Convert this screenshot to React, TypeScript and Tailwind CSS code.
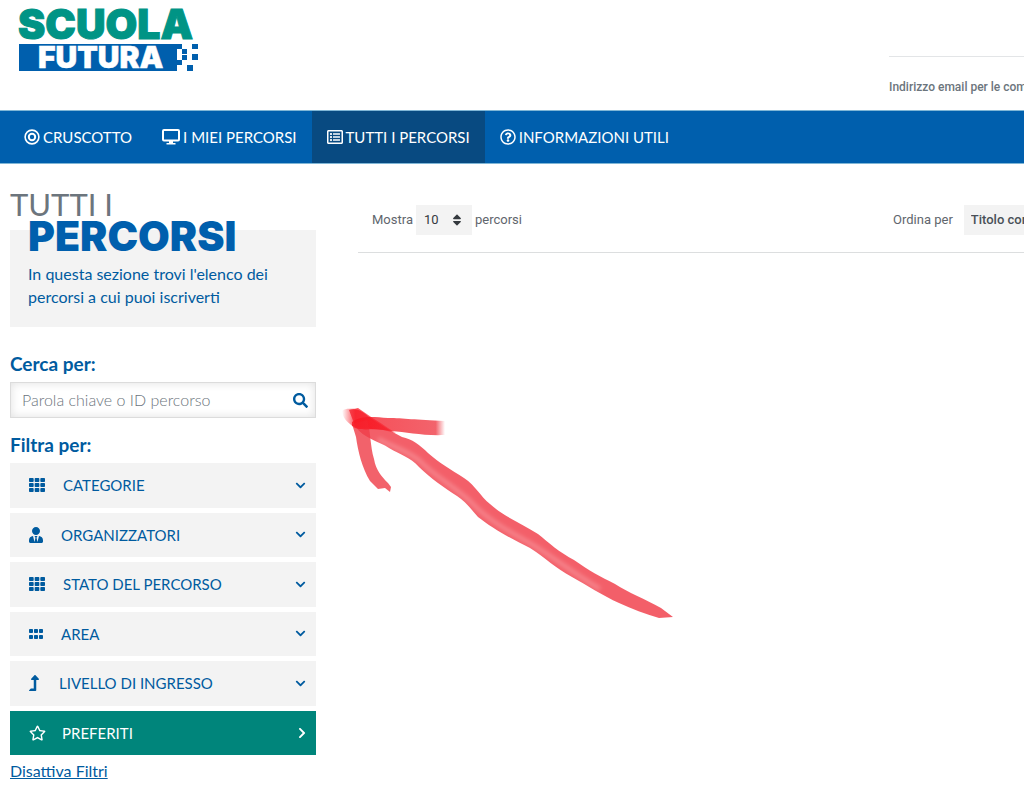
import React from 'react';
import {
  FaChevronDown,
  FaChevronRight,
  FaGripHorizontal,
  FaLevelUpAlt,
  FaRegListAlt,
  FaRegQuestionCircle,
  FaRegStar,
  FaSearch,
  FaSort,
  FaTh,
  FaUserTie,
} from 'react-icons/fa';

const TargetIcon = () => (
  <svg viewBox="0 0 16 16" className="w-4 h-4" fill="none" stroke="currentColor" aria-hidden="true">
    <circle cx="8" cy="8" r="6.9" strokeWidth="1.6" />
    <circle cx="8" cy="8" r="3.2" strokeWidth="2" />
  </svg>
);

const MonitorIcon = () => (
  <svg viewBox="0 0 18 16" className="w-[18px] h-4" fill="none" stroke="currentColor" aria-hidden="true">
    <rect x="1" y="1" width="16" height="10.5" rx="1" strokeWidth="2" />
    <path d="M7 12h4v2h2.5v1.6h-9V14H7z" fill="currentColor" stroke="none" />
  </svg>
);

const navItems = [
  { label: 'CRUSCOTTO', icon: <TargetIcon />, active: false },
  { label: 'I MIEI PERCORSI', icon: <MonitorIcon />, active: false },
  { label: 'TUTTI I PERCORSI', icon: <FaRegListAlt className="w-4 h-4" />, active: true },
  { label: 'INFORMAZIONI UTILI', icon: <FaRegQuestionCircle className="w-4 h-4" />, active: false },
];

const filters = [
  { label: 'CATEGORIE', icon: <FaTh className="w-4 h-4" />, gap: 'gap-[18px]' },
  { label: 'ORGANIZZATORI', icon: <FaUserTie className="w-3.5 h-4" />, gap: 'gap-[18px]' },
  { label: 'STATO DEL PERCORSO', icon: <FaTh className="w-4 h-4" />, gap: 'gap-[18px]' },
  { label: 'AREA', icon: <FaGripHorizontal className="w-3.5 h-4" />, gap: 'gap-[18px]' },
  { label: 'LIVELLO DI INGRESSO', icon: <FaLevelUpAlt className="w-2.5 h-4" />, gap: 'gap-5' },
];

const Logo = () => (
  <a href="#home" aria-label="Scuola Futura" className="block">
    <svg viewBox="0 0 182 66" className="w-[182px] h-[66px]" fontFamily="Inter, sans-serif" fontWeight="900">
      <text x="0" y="33" fontSize="41" fill="#009485" stroke="#009485" strokeWidth="1">SCUOLA</text>
      <path
        fill="#005fad"
        d="M1 38h158v16h5v5h-5v6H1z M159 38h5v5h-5z M174 38h6v5h-6z M164 43h5v5h-5z M174 48h6v6h-6z M164 49h5v5h-5z M169 59h6v6h-6z"
      />
      <text x="20" y="62" fontSize="30" fill="#fff" stroke="#fff" strokeWidth="0.5">FUTURA</text>
    </svg>
  </a>
);

const Header = () => (
  <header className="flex justify-between pl-[18px] h-[110px]">
    <div className="pt-1.5">
      <Logo />
    </div>
    <div className="w-[135px] pt-14 overflow-hidden">
      <p className="border-t border-[#e3e5e7] pt-5 text-[12px] leading-5 font-medium text-[#6c757d] whitespace-nowrap font-['Roboto',sans-serif]">
        Indirizzo email per le comunicazioni
      </p>
    </div>
  </header>
);

const Navbar = () => (
  <nav className="flex bg-[#005fad] border-y border-[#7fb6d6] pl-[9px]">
    {navItems.map((item) => (
      <a
        key={item.label}
        href="#nav"
        className={`flex items-center gap-[3px] px-[15px] h-[52px] text-[15px] text-white whitespace-nowrap ${item.active ? 'bg-[#084a81]' : ''}`}
      >
        {item.icon}
        {item.label}
      </a>
    ))}
  </nav>
);

const Sidebar = () => (
  <aside className="w-[306px] shrink-0 pt-[27px] text-[#005b9f]">
    <h1 className="text-[31px] leading-[26px] text-[#6c757d]">TUTTI I</h1>
    <div className="flex flex-col mt-[13px] bg-[#f3f3f3] px-[18px] pb-[19px]">
      <strong className="-mt-3.5 text-[41px] leading-10 font-black text-[#005fad] font-['Inter',sans-serif]">PERCORSI</strong>
      <p className="mt-1.5 text-[16px] leading-[23px]">In questa sezione trovi l'elenco dei percorsi a cui puoi iscriverti</p>
    </div>

    <label htmlFor="search" className="block mt-[25px] text-[19px] leading-6 font-bold">
      Cerca per:
    </label>
    <div className="flex items-center mt-1.5 h-9 border border-[#dcdcdc] shadow-[inset_0_0_10px_rgba(0,0,0,0.12)]">
      <input
        id="search"
        type="text"
        placeholder="Parola chiave o ID percorso"
        className="grow min-w-0 pl-[11px] text-[16px] bg-transparent outline-none placeholder:text-[#6c757d] placeholder:font-light"
      />
      <button type="button" aria-label="Cerca" className="px-[7px]">
        <FaSearch className="w-[15px] h-[15px]" />
      </button>
    </div>

    <h2 className="mt-[15px] text-[19px] leading-6 font-bold">Filtra per:</h2>
    <div className="grid auto-rows-fr gap-[5px] h-[292px] mt-1.5 text-[15px]">
      {filters.map((filter) => (
        <button
          key={filter.label}
          type="button"
          className={`flex items-center pl-[19px] pr-2.5 bg-[#f3f3f3] ${filter.gap}`}
        >
          {filter.icon}
          <span className="grow text-left">{filter.label}</span>
          <FaChevronDown className="w-[11px] h-[11px]" />
        </button>
      ))}
      <button type="button" className="flex items-center gap-4 pl-[19px] pr-2.5 bg-[#00857b] text-white">
        <FaRegStar className="w-[17px] h-4" />
        <span className="grow text-left">PREFERITI</span>
        <FaChevronRight className="w-2 h-3" />
      </button>
    </div>
    <a href="#reset" className="inline-block mt-1 text-[16px] leading-6 underline">
      Disattiva Filtri
    </a>
  </aside>
);

const Results = () => (
  <section className="grow min-w-0 font-['Roboto',sans-serif] text-[13px] text-[#5f666d]">
    <div className="flex items-center justify-between pt-[41px] pb-[17px] pl-3.5 border-b border-[#dcdedf]">
      <div className="flex items-center gap-[3px]">
        <label htmlFor="page-size">Mostra</label>
        <div className="relative">
          <select id="page-size" className="appearance-none w-14 h-[30px] pl-2 bg-[#f3f3f3] text-[#34393e]">
            <option>10</option>
          </select>
          <FaSort className="absolute right-2.5 top-2 w-2.5 h-3.5 text-[#34393e] pointer-events-none" />
        </div>
        <span>percorsi</span>
      </div>
      <div className="flex items-center gap-[11px] w-[131px] overflow-hidden whitespace-nowrap">
        <label htmlFor="order">Ordina per</label>
        <select id="order" className="appearance-none shrink-0 w-[150px] h-[30px] pl-[7px] bg-[#f3f3f3] font-medium text-[#495057]">
          <option>Titolo corso</option>
        </select>
      </div>
    </div>
  </section>
);

/* Brush-painted arrow that points to the search box */
const BrushArrow = () => (
  <svg viewBox="0 0 360 240" className="absolute left-[330px] top-[390px] w-[360px] h-60 pointer-events-none" aria-hidden="true">
    <defs>
      <linearGradient id="barb" x1="0" x2="1">
        <stop offset="0" stopColor="#f5202c" stopOpacity="0.8" />
        <stop offset="0.9" stopColor="#f04852" stopOpacity="0.85" />
        <stop offset="1" stopColor="#f04852" stopOpacity="0" />
      </linearGradient>
      <linearGradient id="tip" x1="0" x2="1">
        <stop offset="0" stopColor="#fa1520" stopOpacity="0" />
        <stop offset="0.25" stopColor="#fa1520" stopOpacity="0.75" />
        <stop offset="1" stopColor="#fa1520" stopOpacity="0.4" />
      </linearGradient>
      <filter id="bristle">
        <feGaussianBlur stdDeviation="2" />
      </filter>
    </defs>
    <path
      fill="#f1404c"
      fillOpacity="0.84"
      d="M19 20C28 17 34 23 42 29C52 35 62 42 72 47C82 49 90 55 98 63C109 73 122 80 134 88C146 96 150 106 160 114C174 127 193 134 208 144C219 153 229 162 244 170C258 180 271 187 285 194C299 203 315 209 331 218L343 227L329 228C315 224 302 219 289 213C273 206 257 195 242 187C225 178 216 168 200 158C183 150 162 138 148 127C141 119 135 111 127 106C115 98 100 88 89 77C80 67 71 65 59 58C49 51 34 49 25 36Z"
    />
    <path fill="url(#barb)" d="M22 32C31 25 44 27 58 28C74 28 85 30 115 31L115 45C93 46 77 42 61 41C47 39 36 39 22 36Z" />
    <path
      fill="#ef3f4a"
      fillOpacity="0.82"
      d="M22 34L37 30C41 42 40 56 44 69C46 80 51 86 58 93L61 97L60 102L55 98L48 99L40 91C32 78 28 61 26 47Z"
    />
    <path fill="url(#tip)" d="M12 21C16 17 22 20 28 18C38 25 49 32 58 38L66 43L53 40C43 38 35 41 25 38C19 33 13 30 12 21Z" />
    <path
      d="M48 49C63 57 78 61 90 71C103 85 125 97 140 111C157 130 180 142 203 155C226 169 246 185 270 199"
      fill="none"
      stroke="#fff"
      strokeOpacity="0.25"
      strokeWidth="4"
      filter="url(#bristle)"
    />
  </svg>
);

export default function App() {
  return (
    <div className="relative overflow-hidden bg-white font-['Lato',sans-serif]">
      <Header />
      <Navbar />
      <main className="flex gap-[42px] pl-2.5">
        <Sidebar />
        <Results />
      </main>
      <BrushArrow />
    </div>
  );
}
